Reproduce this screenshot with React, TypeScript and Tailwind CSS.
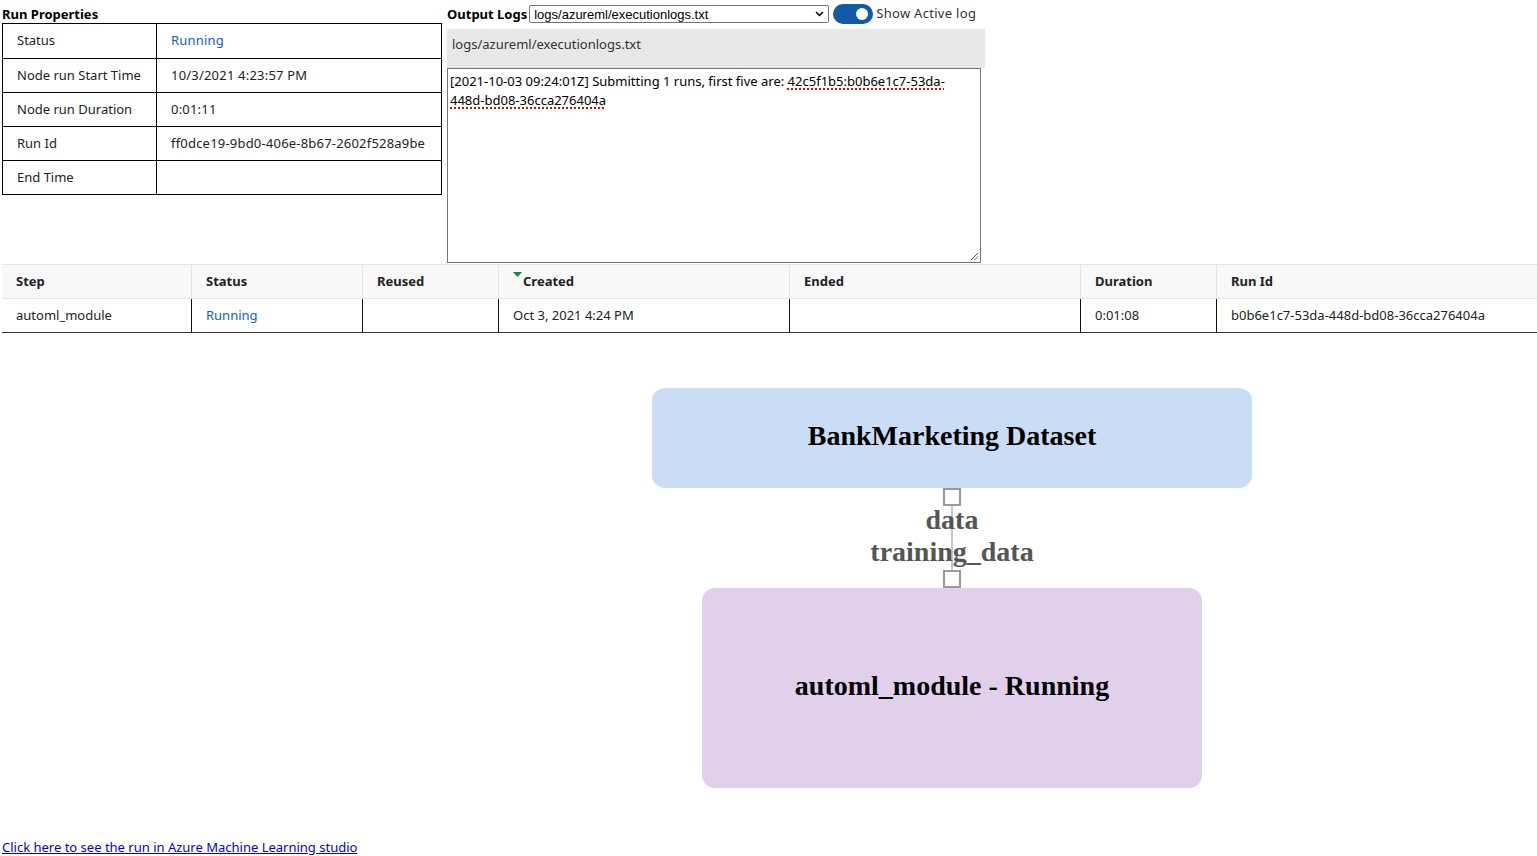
import React from 'react';

const ui = { fontFamily: '"Noto Sans", "Open Sans", sans-serif' };
const serif = { fontFamily: '"Liberation Serif", "Times New Roman", serif' };

const props: [string, string][] = [
  ['Status', 'Running'],
  ['Node run Start Time', '10/3/2021 4:23:57 PM'],
  ['Node run Duration', '0:01:11'],
  ['Run Id', 'ff0dce19-9bd0-406e-8b67-2602f528a9be'],
  ['End Time', ''],
];

const columns = [
  { name: 'Step', w: 'w-[189px]', value: 'automl_module' },
  { name: 'Status', w: 'w-[171px]', value: 'Running' },
  { name: 'Reused', w: 'w-[136px]', value: '' },
  { name: 'Created', w: 'w-[291px]', value: 'Oct 3, 2021 4:24 PM' },
  { name: 'Ended', w: 'w-[291px]', value: '' },
  { name: 'Duration', w: 'w-[136px]', value: '0:01:08' },
  { name: 'Run Id', w: 'flex-1', value: 'b0b6e1c7-53da-448d-bd08-36cca276404a' },
];

function RunProperties() {
  return (
    <div className="w-[440px] shrink-0">
      <div className="h-[23px] pt-[5px] text-[13px] leading-[18px] font-bold text-black">Run Properties</div>
      <div className="border border-black">
        {props.map(([k, v], i) => (
          <div key={k} className={`flex h-[34px] ${i > 0 ? 'border-t border-black' : ''}`}>
            <div className="w-[154px] border-r border-black pl-[14px] flex items-center text-[13px] text-[#222]">{k}</div>
            <div className={`flex-1 pl-[14px] flex items-center text-[13px] tracking-[0.2px] ${k === 'Status' ? 'text-[#0b62c9]' : 'text-[#222]'}`}>{v}</div>
          </div>
        ))}
      </div>
    </div>
  );
}

function OutputLogs() {
  return (
    <div className="ml-[5px] w-[538px]">
      <div className="flex items-center h-[29px] pb-[1px]">
        <span className="text-[13px] font-bold text-black leading-[18px] mr-[2px]">Output Logs</span>
        <div className="relative w-[300px] h-[18px] border border-[#767676] rounded-[2px] bg-white flex items-center pl-[4px]" style={{ fontFamily: '"Liberation Sans", Arial, sans-serif' }}>
          <span className="text-[13px] text-black leading-none">logs/azureml/executionlogs.txt</span>
          <svg className="absolute right-[4px] top-[4px]" width="9" height="8" viewBox="0 0 9 8">
            <path d="M1 2 L4.5 5.5 L8 2" fill="none" stroke="#000" strokeWidth="1.5" />
          </svg>
        </div>
        <div className="ml-[4px] w-[40px] h-[20px] rounded-full bg-[#0f5ba6] relative">
          <div className="absolute right-[5px] top-[4px] w-[12px] h-[12px] rounded-full bg-white" />
        </div>
        <span className="ml-[3px] text-[13px] tracking-[0.3px] text-[#333]">Show Active log</span>
      </div>
      <div className="h-[39px] bg-[#e8e8e8] pl-[5px] flex items-center text-[13px] text-[#333] pb-[8px]">logs/azureml/executionlogs.txt</div>
      <div className="relative w-[534px] h-[195px] border border-[#767676] bg-white px-[2px] pt-[3px] text-[13px] leading-[19px] text-black">
        [2021-10-03 09:24:01Z] Submitting 1 runs, first five are:{' '}
        <span className="underline decoration-dotted decoration-[#e00] decoration-2 underline-offset-2">42c5f1b5:b0b6e1c7-53da-448d-bd08-36cca276404a</span>
        <svg className="absolute right-[1px] bottom-[1px]" width="9" height="9" viewBox="0 0 9 9">
          <path d="M8 1 L1 8 M8 4.5 L4.5 8" stroke="#555" strokeWidth="1" />
        </svg>
      </div>
    </div>
  );
}

function StepsTable() {
  return (
    <div className="ml-[2px] mt-[1px] text-[13px]">
      <div className="flex h-[34px] bg-[#f8f8f8] border-t border-[#e6e6e6]">
        {columns.map((c, i) => (
          <div key={c.name} className={`${c.w} shrink-0 flex items-center pl-[14px] font-bold text-[#222] ${i > 0 ? 'border-l border-[#e3e3e3]' : ''} relative`}>
            {c.name === 'Created' && (
              <svg className="absolute left-[14px] top-[7px]" width="9" height="5" viewBox="0 0 9 5">
                <path d="M0 0 L9 0 L4.5 5 Z" fill="#0c8a4a" />
              </svg>
            )}
            <span className={c.name === 'Created' ? 'pl-[10px]' : ''}>{c.name}</span>
          </div>
        ))}
      </div>
      <div className="flex h-[35px] border-t border-[#e6e6e6] border-b border-b-[#333]">
        {columns.map((c, i) => (
          <div key={c.name} className={`${c.w} shrink-0 flex items-center pl-[14px] ${c.name === 'Status' ? 'text-[#0b62c9]' : 'text-[#222]'} ${i > 0 ? 'border-l border-[#111]' : ''}`}>
            {c.value}
          </div>
        ))}
      </div>
    </div>
  );
}

function Graph() {
  return (
    <div className="ml-[652px] mt-[55px] w-[600px] flex flex-col items-center" style={serif}>
      <div className="w-[600px] h-[100px] rounded-[13px] bg-[#c9ddf5] flex items-center justify-center">
        <span className="text-[28px] leading-[32px] font-bold text-black -translate-y-[2px]">BankMarketing Dataset</span>
      </div>
      <div className="relative w-[600px] h-[100px] flex flex-col items-center">
        <div className="absolute left-[299px] top-[18px] h-[64px] w-[2px] bg-[#c8c8c8]" />
        <div className="w-[18px] h-[18px] border-2 border-[#999] bg-white relative" />
        <div className="relative h-[64px] flex flex-col items-center justify-center text-[28px] leading-[32px] font-bold text-[#555] -translate-y-[2px]">
          <span>data</span>
          <span>training_data</span>
        </div>
        <div className="w-[18px] h-[18px] border-2 border-[#999] bg-white relative" />
      </div>
      <div className="w-[500px] h-[200px] rounded-[13px] bg-[#e0d0ec] flex items-center justify-center">
        <span className="text-[28px] leading-[32px] font-bold text-black -translate-y-[2px]">automl_module - Running</span>
      </div>
    </div>
  );
}

export default function App() {
  return (
    <div className="w-[1537px] h-[856px] overflow-hidden bg-white" style={ui}>
      <div className="flex pl-[2px] pt-0">
        <RunProperties />
        <OutputLogs />
      </div>
      <StepsTable />
      <Graph />
      <div className="ml-[2px] mt-[50px] leading-[16px]">
        <a href="#" className="text-[13px] text-[#0000ee] underline leading-[16px]">Click here to see the run in Azure Machine Learning studio</a>
      </div>
    </div>
  );
}
